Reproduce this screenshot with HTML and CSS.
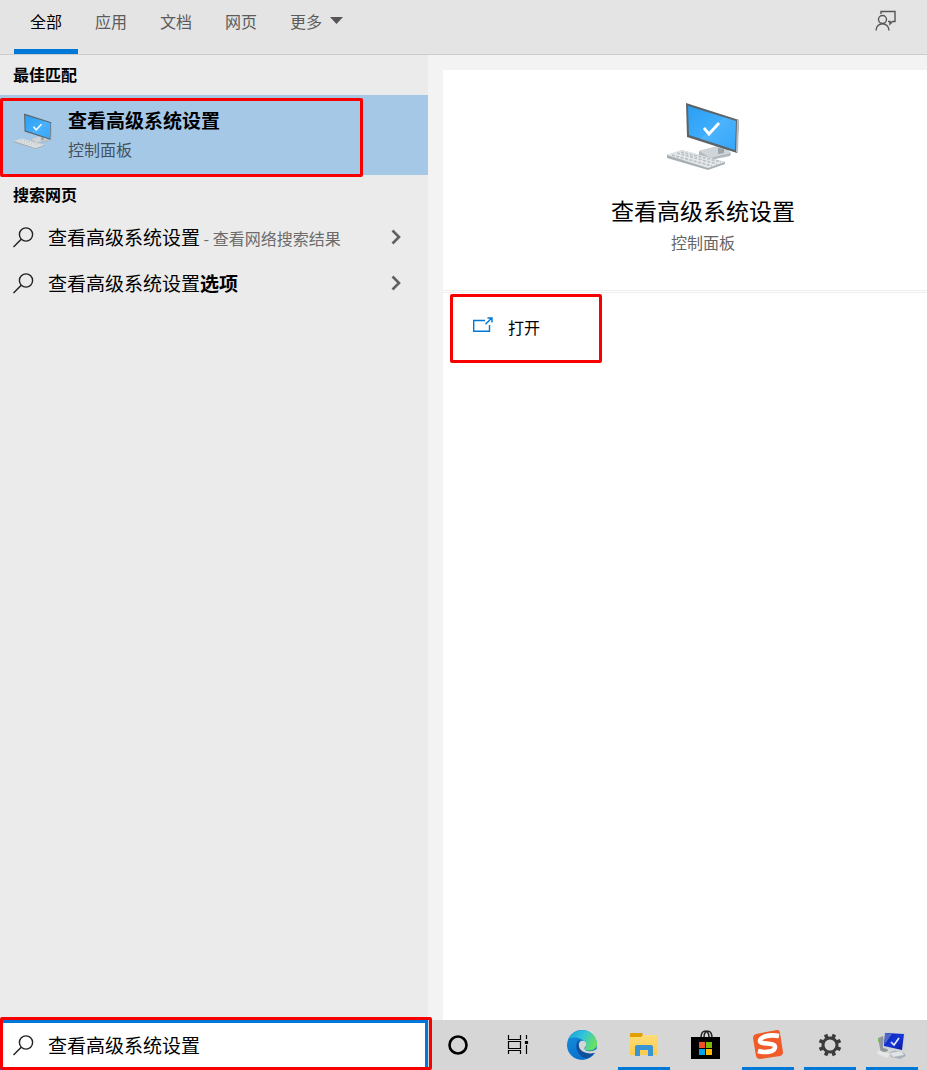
FILE: index.html
```html
<!DOCTYPE html>
<html lang="zh-CN">
<head>
<meta charset="utf-8">
<meta name="viewport" content="width=device-width, initial-scale=1">
<title>查看高级系统设置</title>
<link rel="stylesheet" href="styles.css">
</head>
<body>
<svg class="defs" aria-hidden="true">
  <defs>
    <linearGradient id="screen" x1="0" y1="0" x2="1" y2="1">
      <stop offset="0" stop-color="#2b9ff3"/><stop offset=".5" stop-color="#3fadfd"/><stop offset=".51" stop-color="#4db3fd"/><stop offset="1" stop-color="#35a6fa"/>
    </linearGradient>
    <linearGradient id="edgeTop" x1="0" y1="0" x2="1" y2=".4">
      <stop offset="0" stop-color="#1a9fd9"/><stop offset=".55" stop-color="#33c5d9"/><stop offset="1" stop-color="#65df65"/>
    </linearGradient>
    <linearGradient id="edgeLeft" x1="0" y1="0" x2=".5" y2="1">
      <stop offset="0" stop-color="#1790dc"/><stop offset="1" stop-color="#0871cd"/>
    </linearGradient>
    <linearGradient id="folder" x1="0" y1="0" x2="0" y2="1">
      <stop offset="0" stop-color="#ffdc78"/><stop offset="1" stop-color="#fbcb49"/>
    </linearGradient>
    <linearGradient id="crt" x1="0" y1="0" x2="1" y2="1">
      <stop offset="0" stop-color="#0818a8"/><stop offset=".5" stop-color="#1536d8"/><stop offset="1" stop-color="#0a1694"/>
    </linearGradient>
    <symbol id="computer" viewBox="0 0 72 68">
      <path d="M32 49 55 43 64 51 63 54 43 58 32 53Z" fill="#aeb8bd"/>
      <path d="M32 49 55 43 64 51 43 56Z" fill="#cfd5d8"/>
      <path d="M51 46 57 47 57 51 51 52Z" fill="#9ca5aa"/>
      <path d="M19 1 72 18 70 51 20 35Z" fill="#5c6469"/>
      <path d="M70 18 72 18 71 51 69 50Z" fill="#b7c0c5"/>
      <path d="M21 4 69 19 68 48 22 33Z" fill="url(#screen)"/>
      <path d="M37 26 42 32 52 21" fill="none" stroke="#fff" stroke-width="2.800"/>
      <path d="M0 53 15 48 58 60 58 62 41 68 0 56Z" fill="#a8b0b4"/>
      <path d="M0 53 15 48 58 60 41 66Z" fill="#e4e8ea"/>
      <path d="M5 53 45 64M10 51 50 62M14 50 54 60" stroke="#b8bfc3" stroke-width="1.600" stroke-dasharray="3 1.500"/>
    </symbol>
    <symbol id="magnifier" viewBox="0 0 21 21">
      <circle cx="13" cy="7.500" r="6.600" fill="none" stroke="currentColor" stroke-width="1.400"/>
      <path d="M8.200 12.300.5 20" fill="none" stroke="currentColor" stroke-width="1.500"/>
    </symbol>
    <symbol id="chevron" viewBox="0 0 10 16">
      <path d="M1.500 1.500 8 8 1.500 14.500" fill="none" stroke="currentColor" stroke-width="2.600"/>
    </symbol>
  </defs>
</svg>

<header class="topbar">
  <nav class="tabs" aria-label="搜索范围">
    <button class="tab tab-active">全部</button>
    <button class="tab">应用</button>
    <button class="tab">文档</button>
    <button class="tab">网页</button>
    <button class="tab tab-more">更多<svg class="caret" viewBox="0 0 13 7" aria-hidden="true"><path d="M0 0H13L6.500 7Z" fill="#555"/></svg></button>
  </nav>
  <button class="feedback" aria-label="反馈">
    <svg class="feedback-icon" viewBox="0 0 22 22" fill="none" stroke="#555" stroke-width="1.400" aria-hidden="true">
      <path d="M6 4V1.500H20V11.500H17.500L15 14V11.500H13"/><circle cx="7.500" cy="9.500" r="4"/><path d="M1 20.500C1 11.500 14 11.500 14 20.500"/>
    </svg>
  </button>
</header>

<main class="content">
  <section class="results">
    <h2 class="group-title">最佳匹配</h2>
    <button class="best-match marked">
      <svg class="best-icon" aria-hidden="true"><use href="#computer"/></svg>
      <span class="best-text"><strong class="best-name">查看高级系统设置</strong><span class="best-kind">控制面板</span></span>
    </button>
    <h2 class="group-title">搜索网页</h2>
    <button class="web-result">
      <svg class="magnifier" aria-hidden="true"><use href="#magnifier"/></svg>
      <span class="web-text">查看高级系统设置<small class="web-hint"> - 查看网络搜索结果</small></span>
      <svg class="chevron" aria-hidden="true"><use href="#chevron"/></svg>
    </button>
    <button class="web-result">
      <svg class="magnifier" aria-hidden="true"><use href="#magnifier"/></svg>
      <span class="web-text">查看高级系统设置<b>选项</b></span>
      <svg class="chevron" aria-hidden="true"><use href="#chevron"/></svg>
    </button>
  </section>
  <section class="preview">
    <div class="card">
      <div class="card-head">
        <svg class="card-icon" aria-hidden="true"><use href="#computer"/></svg>
        <h1 class="card-title">查看高级系统设置</h1>
        <p class="card-kind">控制面板</p>
      </div>
      <button class="action marked">
        <svg class="open-icon" viewBox="0 0 20 16" fill="none" stroke="#0078d7" stroke-width="1.400" aria-hidden="true"><path d="M12 3.500H.7V14.300H16.500V8M12.500 7.200 18.500 1.200M14.500 1H19V5.500"/></svg>
        打开
      </button>
    </div>
  </section>
</main>

<footer class="taskbar">
  <label class="search marked">
    <svg class="magnifier" aria-hidden="true"><use href="#magnifier"/></svg>
    <input class="search-input" type="text" value="查看高级系统设置" aria-label="搜索">
  </label>
  <div class="system-buttons">
    <button class="task task-system" aria-label="Cortana"><svg class="task-icon" viewBox="0 0 32 32"><circle cx="16" cy="16" r="8.500" fill="none" stroke="#000" stroke-width="2.600"/></svg></button>
    <button class="task task-system" aria-label="任务视图"><svg class="task-icon" viewBox="0 0 32 32" fill="none" stroke="#000" stroke-width="1.200"><path d="M6.500 6V10.500H18.500V6M6.500 25V21.500H18.500V25M6.500 12.500H18.500V19.500H6.500ZM24.500 6V10M24.500 16V25"/><path d="M23.500 12.500H25.500V14.500H23.500Z" fill="#000"/></svg></button>
  </div>
  <div class="apps">
    <button class="task" aria-label="Microsoft Edge"><svg class="task-icon" viewBox="0 0 32 32">
      <circle cx="16" cy="16" r="15" fill="url(#edgeLeft)"/>
      <path d="M2 11C7-3 29-2 31 14C32 22 21 23 18.500 20C21 17 20 12 15 10C10 8 4 8 2 11Z" fill="url(#edgeTop)"/>
      <path d="M13 11C8 15 10 25 18 29C23 30 28 26 30 22C25 25 18 24 14 19C12 16 12 13 14 11Z" fill="#104f9b"/>
      <path d="M13 17C12 12 18 10 20 14C21 17 18 18 18.500 20C20 23 26 23 31 20L32 23C27 25 20 25 16 22C14 20 13 19 13 17Z" fill="#d6d6d6"/>
    </svg></button>
    <button class="task task-open" aria-label="文件资源管理器"><svg class="task-icon" viewBox="0 0 32 32">
      <path d="M2 8H13L16 6H29V26H2Z" fill="url(#folder)"/><path d="M2 5Q2 4 3 4H14L15 6 13 8H2Z" fill="#e0a000"/>
      <path d="M7 27V18Q7 16 9 16H23Q25 16 25 18V27H20V21H12V27Z" fill="#3a93d5"/>
    </svg></button>
    <button class="task" aria-label="Microsoft Store"><svg class="task-icon" viewBox="0 0 32 32">
      <path d="M11 9C11 0 19 0 19 8M14 8C14 0 22 0 22 9" fill="none" stroke="#222" stroke-width="1.500"/><path d="M1 8H30V30H1Z" fill="#000"/>
      <path d="M9 13H15V19H9Z" fill="#f25022"/><path d="M16 13H22V19H16Z" fill="#7fba00"/><path d="M9 20H15V26H9Z" fill="#00a4ef"/><path d="M16 20H22V26H16Z" fill="#ffb900"/>
    </svg></button>
    <button class="task task-open" aria-label="搜狗输入法"><svg class="task-icon" viewBox="0 0 32 32">
      <path d="M4 5 25 1Q28 1 28 4L31 23Q31 26 28 27L8 30Q5 30 4 27L1 9Q1 6 4 5Z" fill="#f15a29"/>
      <path d="M27 7C17 5 8 8 8 12C8 16 23 13 23 18C23 23 13 24 6 22" fill="none" stroke="#fff" stroke-width="4.600"/>
    </svg></button>
    <button class="task task-open" aria-label="设置"><svg class="task-icon" viewBox="0 0 32 32">
      <g fill="none" stroke="#3c3c3c"><circle cx="16" cy="16" r="7" stroke-width="3"/><path d="M11.600 5.500 13 9M20.400 5.500 19 9M11.600 26.500 13 23M20.400 26.500 19 23M5.500 11.600 9 13M5.500 20.400 9 19M26.500 11.600 23 13M26.500 20.400 23 19" stroke-width="3.600"/></g>
    </svg></button>
    <button class="task task-open" aria-label="系统属性"><svg class="task-icon" viewBox="0 0 32 32">
      <path d="M2 9 7 7 12 22 5 24Z" fill="#8f969b"/><path d="M2 10 4 9V12L2 13Z" fill="#73c23e"/>
      <path d="M2 21 14 25 11 29 1 25Z" fill="#e4e6e7"/><path d="M14 23 26 20 30 27 24 30 15 28Z" fill="#aab2b8"/><path d="M14 24 25 22 28 26 17 28Z" fill="#e0e4e6"/>
      <path d="M8 3 30 4 28 24 7 19Z" fill="#cdd3d7"/><path d="M9 4 28 5 26 21 8 17Z" fill="url(#crt)"/><path d="M9 4 16 5 9 15Z" fill="#5268c8"/>
      <path d="M15 13 18 16 23 9" fill="none" stroke="#e5eaff" stroke-width="1.600"/>
    </svg></button>
  </div>
</footer>
</body>
</html>
```

FILE: styles.css
```css
*,
*::after {
  box-sizing: border-box;
}

body {
  margin: 0;
  min-height: 100vh;
  display: flex;
  flex-direction: column;
  background: #f3f3f3;
  color: #000;
  font: 16px/24px "Noto Sans CJK SC", sans-serif;
}

button,
input {
  margin: 0;
  padding: 0;
  border: 0;
  background: none;
  color: inherit;
  font: inherit;
  text-align: left;
}

h1,
h2,
p {
  margin: 0;
}

svg {
  display: block;
  flex: none;
}

.defs {
  position: absolute;
  width: 0;
  height: 0;
}

/* Red callout frame drawn over the highlighted element */
.marked {
  position: relative;
}

.marked::after {
  content: "";
  position: absolute;
  z-index: 1;
  border: 3px solid #f80000;
  border-radius: 2px;
  pointer-events: none;
}

.topbar {
  display: flex;
  justify-content: space-between;
  height: 55px;
  padding: 0 30px 0 14px;
  background: #e4e4e4;
  border-bottom: 1px solid #cccccc;
}

.tabs {
  display: flex;
  gap: 1px;
}

.tab {
  display: flex;
  align-items: center;
  padding: 0 16px 8px;
  border-bottom: 5px solid transparent;
  color: #5c5c5c;
}

.tab-active {
  color: #000;
  border-color: #0078d7;
}

.caret {
  width: 13px;
  height: 7px;
  margin-left: 8px;
}

.feedback {
  padding-bottom: 12px;
}

.feedback-icon {
  width: 22px;
  height: 22px;
}

.content {
  flex: 1;
  display: flex;
}

.results {
  flex: none;
  width: 428px;
  background: #ebebeb;
}

.group-title {
  padding: 7px 13px 9px;
  font-size: 16px;
  line-height: 24px;
  font-weight: 700;
}

.best-match {
  display: flex;
  gap: 16px;
  width: 100%;
  height: 80px;
  padding: 11px 14px 13px;
  background: #a6c8e7;
}

.best-match::after {
  inset: 3px 65px -2px 0;
}

.best-icon {
  width: 38px;
  height: 36px;
  margin-top: 7px;
}

.best-text {
  display: flex;
  flex-direction: column;
  gap: 3px;
}

.best-name {
  font-size: 19px;
  line-height: 28px;
}

.best-kind {
  color: #435260;
}

.web-result {
  display: flex;
  align-items: center;
  gap: 14px;
  width: 100%;
  height: 46px;
  padding: 0 27px 2px 13px;
  font-size: 19px;
}

.magnifier {
  width: 21px;
  height: 21px;
  color: #222;
}

.web-text {
  flex: 1;
}

.web-hint {
  color: #6b6b6b;
  font-size: 16px;
}

.chevron {
  width: 10px;
  height: 16px;
  color: #606060;
}

.preview {
  flex: 1;
  display: flex;
  padding: 15px 0 0 15px;
}

.card {
  flex: 1;
  background: #fff;
}

.card-head {
  display: flex;
  flex-direction: column;
  align-items: center;
  height: 223px;
  padding: 32px 0 0 36px;
  border-bottom: 3px double #eeeeee;
}

.card-icon {
  width: 72px;
  height: 68px;
}

.card-title {
  margin-top: 23px;
  font-size: 23px;
  line-height: 34px;
  font-weight: 400;
}

.card-kind {
  margin-top: 3px;
  color: #666;
}

.action {
  display: flex;
  align-items: center;
  gap: 15px;
  width: 100%;
  height: 70px;
  padding: 0 30px 2px;
}

.action::after {
  top: 1px;
  left: 7px;
  width: 152px;
  height: 69px;
}

.open-icon {
  width: 20px;
  height: 16px;
  margin-bottom: 4px;
}

.taskbar {
  display: flex;
  height: 50px;
  background: #d6d6d6;
}

.search {
  flex: none;
  display: flex;
  align-items: center;
  gap: 14px;
  width: 428px;
  padding: 0 10px 0 13px;
  background: #fff;
  border: solid #0078d7;
  border-width: 3px 3px 3px 0;
}

.search::after {
  inset: -6px -7px -3px 0;
}

.search-input {
  flex: 1;
  min-width: 0;
  height: 32px;
  padding-bottom: 2px;
  font-size: 19px;
  outline: 0;
}

.system-buttons,
.apps {
  display: flex;
}

.apps {
  margin-left: 3px;
}

.task {
  display: flex;
  align-items: center;
  justify-content: center;
  width: 52px;
  margin: 0 5px;
  border-bottom: 3px solid transparent;
  padding-top: 3px;
}

.task-system {
  width: 60px;
  margin: 0;
}

.task-open {
  border-color: #0078d7;
}

.task-icon {
  width: 32px;
  height: 32px;
}
```
